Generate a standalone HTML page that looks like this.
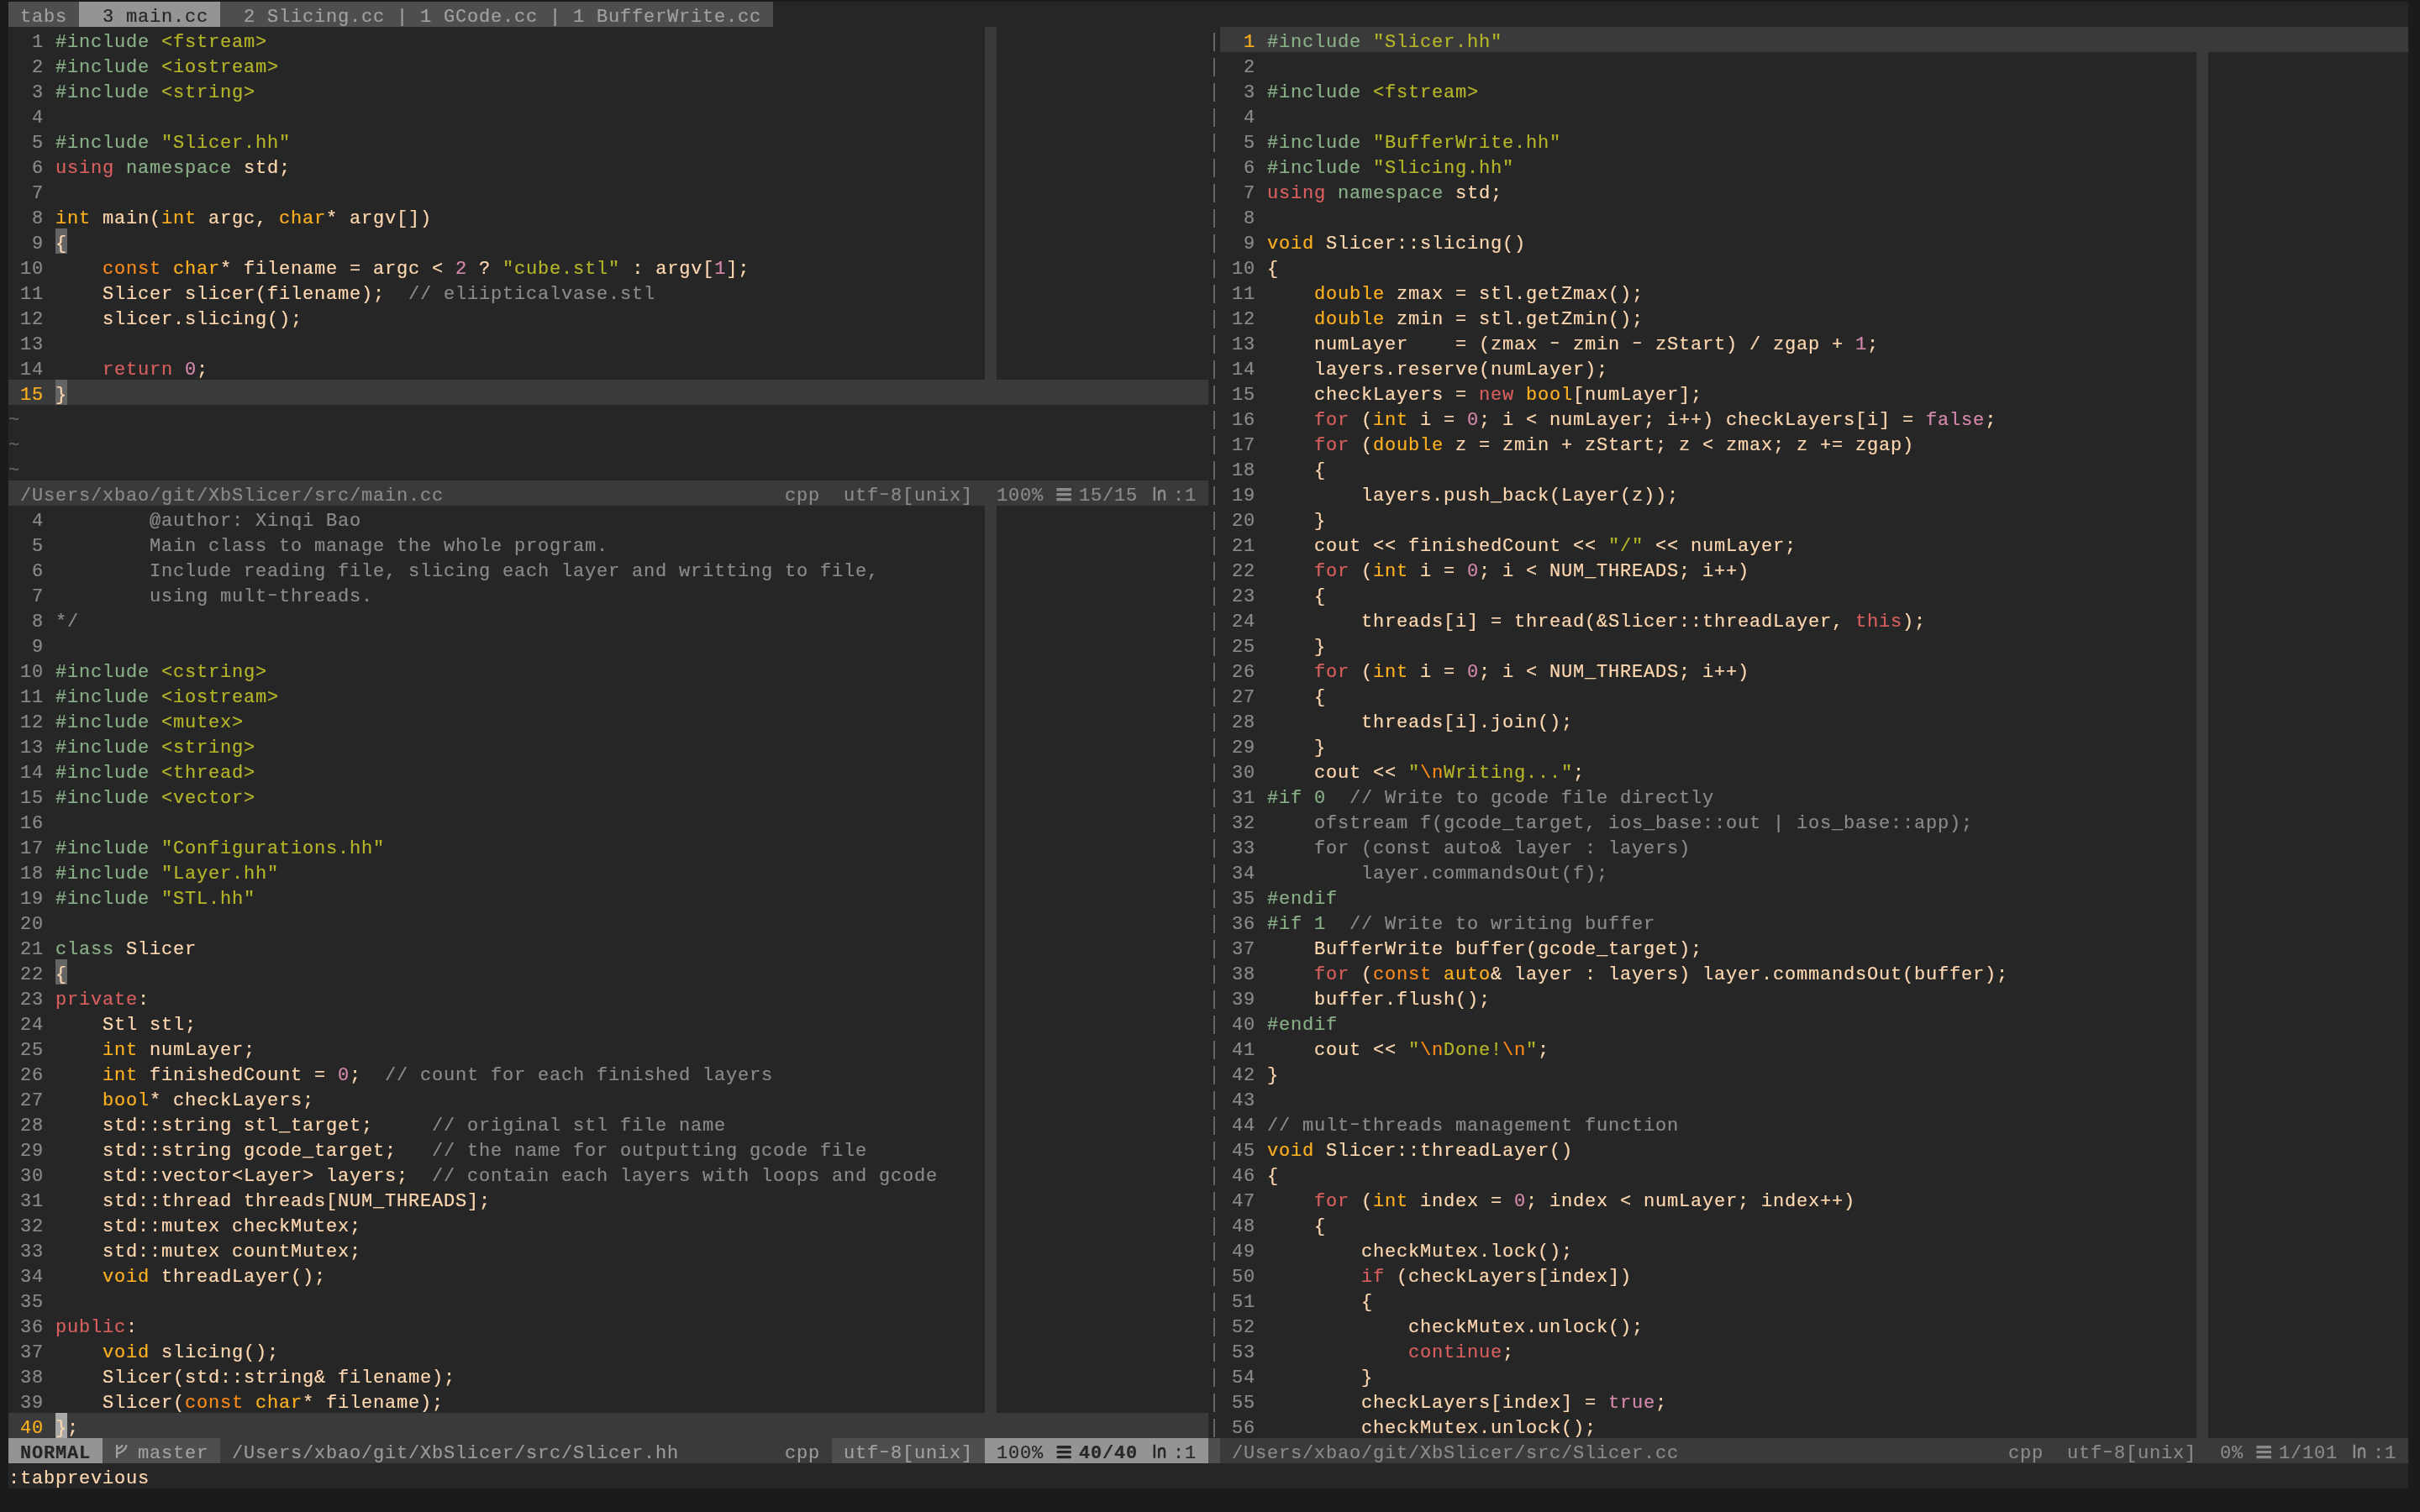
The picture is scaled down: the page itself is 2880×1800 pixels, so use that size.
<!DOCTYPE html><html><head><meta charset="utf-8"><style>
*{margin:0;padding:0;box-sizing:border-box}
html,body{width:2880px;height:1800px;overflow:hidden;background:#1b1b1b}
#scr{position:absolute;left:10px;top:2px;width:2856px;height:1770px;background:#262626}
.r{position:absolute}
.t{position:absolute;white-space:pre;font-family:"Liberation Mono",monospace;font-size:22px;letter-spacing:0.79814px;line-height:30px;height:30px;color:#fdd7b0}
.aqua{color:#8aaf88} .green{color:#b4b42a} .red{color:#d75f5f} .yellow{color:#fcb020}
.orange{color:#f98a1c} .purple{color:#d488ac} .gray{color:#8a8a8a}
.lnr{color:#8a8a8a} .cln{color:#fcb020} .nontext{color:#666666}
.tabf{color:#a0a0a0} .taba{color:#262626}
.sta{color:#262626} .stb{color:#a0a0a0} .stc{color:#9a9a9a} .stnc{color:#8a8a8a}
.hy{display:inline-block;transform:translateY(-1.7px) scaleX(1.45)} .b{font-weight:bold} .fgc{color:#fdd7b0}
#txt{position:absolute;left:0;top:0;width:2880px;height:1800px;will-change:transform;-webkit-text-stroke:0.2px currentColor;}
</style></head><body><div id="scr"></div><div class="r" style="left:10px;top:2px;width:84px;height:30px;background:#4e4e4e"></div><div class="r" style="left:94px;top:2px;width:168px;height:30px;background:#949494"></div><div class="r" style="left:262px;top:2px;width:658px;height:30px;background:#4e4e4e"></div><div class="r" style="left:1172px;top:32px;width:14px;height:450px;background:#3a3a3a"></div><div class="r" style="left:10px;top:452px;width:1428px;height:30px;background:#3a3a3a"></div><div class="r" style="left:66px;top:272px;width:14px;height:30px;background:#646464"></div><div class="r" style="left:66px;top:452px;width:14px;height:30px;background:#646464"></div><div class="r" style="left:1172px;top:602px;width:14px;height:1110px;background:#3a3a3a"></div><div class="r" style="left:10px;top:1682px;width:1428px;height:30px;background:#3a3a3a"></div><div class="r" style="left:66px;top:1142px;width:14px;height:30px;background:#646464"></div><div class="r" style="left:66px;top:1682px;width:14px;height:30px;background:#a8a8a8"></div><div class="r" style="left:2614px;top:32px;width:14px;height:1680px;background:#3a3a3a"></div><div class="r" style="left:1452px;top:32px;width:1414px;height:30px;background:#3a3a3a"></div><div class="r" style="left:1444px;top:39px;width:2px;height:22px;background:#666666"></div><div class="r" style="left:1444px;top:69px;width:2px;height:22px;background:#666666"></div><div class="r" style="left:1444px;top:99px;width:2px;height:22px;background:#666666"></div><div class="r" style="left:1444px;top:129px;width:2px;height:22px;background:#666666"></div><div class="r" style="left:1444px;top:159px;width:2px;height:22px;background:#666666"></div><div class="r" style="left:1444px;top:189px;width:2px;height:22px;background:#666666"></div><div class="r" style="left:1444px;top:219px;width:2px;height:22px;background:#666666"></div><div class="r" style="left:1444px;top:249px;width:2px;height:22px;background:#666666"></div><div class="r" style="left:1444px;top:279px;width:2px;height:22px;background:#666666"></div><div class="r" style="left:1444px;top:309px;width:2px;height:22px;background:#666666"></div><div class="r" style="left:1444px;top:339px;width:2px;height:22px;background:#666666"></div><div class="r" style="left:1444px;top:369px;width:2px;height:22px;background:#666666"></div><div class="r" style="left:1444px;top:399px;width:2px;height:22px;background:#666666"></div><div class="r" style="left:1444px;top:429px;width:2px;height:22px;background:#666666"></div><div class="r" style="left:1444px;top:459px;width:2px;height:22px;background:#666666"></div><div class="r" style="left:1444px;top:489px;width:2px;height:22px;background:#666666"></div><div class="r" style="left:1444px;top:519px;width:2px;height:22px;background:#666666"></div><div class="r" style="left:1444px;top:549px;width:2px;height:22px;background:#666666"></div><div class="r" style="left:1444px;top:579px;width:2px;height:22px;background:#666666"></div><div class="r" style="left:1444px;top:609px;width:2px;height:22px;background:#666666"></div><div class="r" style="left:1444px;top:639px;width:2px;height:22px;background:#666666"></div><div class="r" style="left:1444px;top:669px;width:2px;height:22px;background:#666666"></div><div class="r" style="left:1444px;top:699px;width:2px;height:22px;background:#666666"></div><div class="r" style="left:1444px;top:729px;width:2px;height:22px;background:#666666"></div><div class="r" style="left:1444px;top:759px;width:2px;height:22px;background:#666666"></div><div class="r" style="left:1444px;top:789px;width:2px;height:22px;background:#666666"></div><div class="r" style="left:1444px;top:819px;width:2px;height:22px;background:#666666"></div><div class="r" style="left:1444px;top:849px;width:2px;height:22px;background:#666666"></div><div class="r" style="left:1444px;top:879px;width:2px;height:22px;background:#666666"></div><div class="r" style="left:1444px;top:909px;width:2px;height:22px;background:#666666"></div><div class="r" style="left:1444px;top:939px;width:2px;height:22px;background:#666666"></div><div class="r" style="left:1444px;top:969px;width:2px;height:22px;background:#666666"></div><div class="r" style="left:1444px;top:999px;width:2px;height:22px;background:#666666"></div><div class="r" style="left:1444px;top:1029px;width:2px;height:22px;background:#666666"></div><div class="r" style="left:1444px;top:1059px;width:2px;height:22px;background:#666666"></div><div class="r" style="left:1444px;top:1089px;width:2px;height:22px;background:#666666"></div><div class="r" style="left:1444px;top:1119px;width:2px;height:22px;background:#666666"></div><div class="r" style="left:1444px;top:1149px;width:2px;height:22px;background:#666666"></div><div class="r" style="left:1444px;top:1179px;width:2px;height:22px;background:#666666"></div><div class="r" style="left:1444px;top:1209px;width:2px;height:22px;background:#666666"></div><div class="r" style="left:1444px;top:1239px;width:2px;height:22px;background:#666666"></div><div class="r" style="left:1444px;top:1269px;width:2px;height:22px;background:#666666"></div><div class="r" style="left:1444px;top:1299px;width:2px;height:22px;background:#666666"></div><div class="r" style="left:1444px;top:1329px;width:2px;height:22px;background:#666666"></div><div class="r" style="left:1444px;top:1359px;width:2px;height:22px;background:#666666"></div><div class="r" style="left:1444px;top:1389px;width:2px;height:22px;background:#666666"></div><div class="r" style="left:1444px;top:1419px;width:2px;height:22px;background:#666666"></div><div class="r" style="left:1444px;top:1449px;width:2px;height:22px;background:#666666"></div><div class="r" style="left:1444px;top:1479px;width:2px;height:22px;background:#666666"></div><div class="r" style="left:1444px;top:1509px;width:2px;height:22px;background:#666666"></div><div class="r" style="left:1444px;top:1539px;width:2px;height:22px;background:#666666"></div><div class="r" style="left:1444px;top:1569px;width:2px;height:22px;background:#666666"></div><div class="r" style="left:1444px;top:1599px;width:2px;height:22px;background:#666666"></div><div class="r" style="left:1444px;top:1629px;width:2px;height:22px;background:#666666"></div><div class="r" style="left:1444px;top:1659px;width:2px;height:22px;background:#666666"></div><div class="r" style="left:1444px;top:1689px;width:2px;height:22px;background:#666666"></div><div class="r" style="left:10px;top:572px;width:1428px;height:30px;background:#3a3a3a"></div><div class="r" style="left:10px;top:1712px;width:112px;height:30px;background:#949494"></div><div class="r" style="left:122px;top:1712px;width:140px;height:30px;background:#4e4e4e"></div><div class="r" style="left:262px;top:1712px;width:728px;height:30px;background:#3a3a3a"></div><div class="r" style="left:990px;top:1712px;width:182px;height:30px;background:#4e4e4e"></div><div class="r" style="left:1172px;top:1712px;width:266px;height:30px;background:#949494"></div><div class="r" style="left:1438px;top:1712px;width:14px;height:30px;background:#4e4e4e"></div><div class="r" style="left:1452px;top:1712px;width:1414px;height:30px;background:#3a3a3a"></div><div id="txt"><div class="t" style="left:10px;top:6px;"><span class="tabf"> tabs </span></div><div class="t" style="left:94px;top:6px;"><span class="taba">  3 main.cc </span></div><div class="t" style="left:262px;top:6px;"><span class="tabf">  2 Slicing.cc | 1 GCode.cc | 1 BufferWrite.cc </span></div><div class="t" style="left:10px;top:36px;"><span class="lnr">  1 </span></div><div class="t" style="left:66px;top:36px;"><span class="aqua">#include</span> <span class="green">&lt;fstream&gt;</span></div><div class="t" style="left:10px;top:66px;"><span class="lnr">  2 </span></div><div class="t" style="left:66px;top:66px;"><span class="aqua">#include</span> <span class="green">&lt;iostream&gt;</span></div><div class="t" style="left:10px;top:96px;"><span class="lnr">  3 </span></div><div class="t" style="left:66px;top:96px;"><span class="aqua">#include</span> <span class="green">&lt;string&gt;</span></div><div class="t" style="left:10px;top:126px;"><span class="lnr">  4 </span></div><div class="t" style="left:10px;top:156px;"><span class="lnr">  5 </span></div><div class="t" style="left:66px;top:156px;"><span class="aqua">#include</span> <span class="green">"Slicer.hh"</span></div><div class="t" style="left:10px;top:186px;"><span class="lnr">  6 </span></div><div class="t" style="left:66px;top:186px;"><span class="red">using</span> <span class="aqua">namespace</span> std;</div><div class="t" style="left:10px;top:216px;"><span class="lnr">  7 </span></div><div class="t" style="left:10px;top:246px;"><span class="lnr">  8 </span></div><div class="t" style="left:66px;top:246px;"><span class="yellow">int</span> main(<span class="yellow">int</span> argc, <span class="yellow">char</span>* argv[])</div><div class="t" style="left:10px;top:276px;"><span class="lnr">  9 </span></div><div class="t" style="left:66px;top:276px;">{</div><div class="t" style="left:10px;top:306px;"><span class="lnr"> 10 </span></div><div class="t" style="left:66px;top:306px;">    <span class="orange">const</span> <span class="yellow">char</span>* filename = argc &lt; <span class="purple">2</span> ? <span class="green">"cube.stl"</span> : argv[<span class="purple">1</span>];</div><div class="t" style="left:10px;top:336px;"><span class="lnr"> 11 </span></div><div class="t" style="left:66px;top:336px;">    Slicer slicer(filename);  <span class="gray">// eliipticalvase.stl</span></div><div class="t" style="left:10px;top:366px;"><span class="lnr"> 12 </span></div><div class="t" style="left:66px;top:366px;">    slicer.slicing();</div><div class="t" style="left:10px;top:396px;"><span class="lnr"> 13 </span></div><div class="t" style="left:10px;top:426px;"><span class="lnr"> 14 </span></div><div class="t" style="left:66px;top:426px;">    <span class="red">return</span> <span class="purple">0</span>;</div><div class="t" style="left:10px;top:456px;"><span class="cln"> 15 </span></div><div class="t" style="left:66px;top:456px;">}</div><div class="t" style="left:10px;top:486px;"><span class="nontext">~</span></div><div class="t" style="left:10px;top:516px;"><span class="nontext">~</span></div><div class="t" style="left:10px;top:546px;"><span class="nontext">~</span></div><div class="t" style="left:10px;top:606px;"><span class="lnr">  4 </span></div><div class="t" style="left:66px;top:606px;"><span class="gray">        @author: Xinqi Bao</span></div><div class="t" style="left:10px;top:636px;"><span class="lnr">  5 </span></div><div class="t" style="left:66px;top:636px;"><span class="gray">        Main class to manage the whole program.</span></div><div class="t" style="left:10px;top:666px;"><span class="lnr">  6 </span></div><div class="t" style="left:66px;top:666px;"><span class="gray">        Include reading file, slicing each layer and writting to file,</span></div><div class="t" style="left:10px;top:696px;"><span class="lnr">  7 </span></div><div class="t" style="left:66px;top:696px;"><span class="gray">        using mult<span class="hy">-</span>threads.</span></div><div class="t" style="left:10px;top:726px;"><span class="lnr">  8 </span></div><div class="t" style="left:66px;top:726px;"><span class="gray">*/</span></div><div class="t" style="left:10px;top:756px;"><span class="lnr">  9 </span></div><div class="t" style="left:10px;top:786px;"><span class="lnr"> 10 </span></div><div class="t" style="left:66px;top:786px;"><span class="aqua">#include</span> <span class="green">&lt;cstring&gt;</span></div><div class="t" style="left:10px;top:816px;"><span class="lnr"> 11 </span></div><div class="t" style="left:66px;top:816px;"><span class="aqua">#include</span> <span class="green">&lt;iostream&gt;</span></div><div class="t" style="left:10px;top:846px;"><span class="lnr"> 12 </span></div><div class="t" style="left:66px;top:846px;"><span class="aqua">#include</span> <span class="green">&lt;mutex&gt;</span></div><div class="t" style="left:10px;top:876px;"><span class="lnr"> 13 </span></div><div class="t" style="left:66px;top:876px;"><span class="aqua">#include</span> <span class="green">&lt;string&gt;</span></div><div class="t" style="left:10px;top:906px;"><span class="lnr"> 14 </span></div><div class="t" style="left:66px;top:906px;"><span class="aqua">#include</span> <span class="green">&lt;thread&gt;</span></div><div class="t" style="left:10px;top:936px;"><span class="lnr"> 15 </span></div><div class="t" style="left:66px;top:936px;"><span class="aqua">#include</span> <span class="green">&lt;vector&gt;</span></div><div class="t" style="left:10px;top:966px;"><span class="lnr"> 16 </span></div><div class="t" style="left:10px;top:996px;"><span class="lnr"> 17 </span></div><div class="t" style="left:66px;top:996px;"><span class="aqua">#include</span> <span class="green">"Configurations.hh"</span></div><div class="t" style="left:10px;top:1026px;"><span class="lnr"> 18 </span></div><div class="t" style="left:66px;top:1026px;"><span class="aqua">#include</span> <span class="green">"Layer.hh"</span></div><div class="t" style="left:10px;top:1056px;"><span class="lnr"> 19 </span></div><div class="t" style="left:66px;top:1056px;"><span class="aqua">#include</span> <span class="green">"STL.hh"</span></div><div class="t" style="left:10px;top:1086px;"><span class="lnr"> 20 </span></div><div class="t" style="left:10px;top:1116px;"><span class="lnr"> 21 </span></div><div class="t" style="left:66px;top:1116px;"><span class="aqua">class</span> Slicer</div><div class="t" style="left:10px;top:1146px;"><span class="lnr"> 22 </span></div><div class="t" style="left:66px;top:1146px;">{</div><div class="t" style="left:10px;top:1176px;"><span class="lnr"> 23 </span></div><div class="t" style="left:66px;top:1176px;"><span class="red">private</span>:</div><div class="t" style="left:10px;top:1206px;"><span class="lnr"> 24 </span></div><div class="t" style="left:66px;top:1206px;">    Stl stl;</div><div class="t" style="left:10px;top:1236px;"><span class="lnr"> 25 </span></div><div class="t" style="left:66px;top:1236px;">    <span class="yellow">int</span> numLayer;</div><div class="t" style="left:10px;top:1266px;"><span class="lnr"> 26 </span></div><div class="t" style="left:66px;top:1266px;">    <span class="yellow">int</span> finishedCount = <span class="purple">0</span>;  <span class="gray">// count for each finished layers</span></div><div class="t" style="left:10px;top:1296px;"><span class="lnr"> 27 </span></div><div class="t" style="left:66px;top:1296px;">    <span class="yellow">bool</span>* checkLayers;</div><div class="t" style="left:10px;top:1326px;"><span class="lnr"> 28 </span></div><div class="t" style="left:66px;top:1326px;">    std::string stl_target;     <span class="gray">// original stl file name</span></div><div class="t" style="left:10px;top:1356px;"><span class="lnr"> 29 </span></div><div class="t" style="left:66px;top:1356px;">    std::string gcode_target;   <span class="gray">// the name for outputting gcode file</span></div><div class="t" style="left:10px;top:1386px;"><span class="lnr"> 30 </span></div><div class="t" style="left:66px;top:1386px;">    std::vector&lt;Layer&gt; layers;  <span class="gray">// contain each layers with loops and gcode</span></div><div class="t" style="left:10px;top:1416px;"><span class="lnr"> 31 </span></div><div class="t" style="left:66px;top:1416px;">    std::thread threads[NUM_THREADS];</div><div class="t" style="left:10px;top:1446px;"><span class="lnr"> 32 </span></div><div class="t" style="left:66px;top:1446px;">    std::mutex checkMutex;</div><div class="t" style="left:10px;top:1476px;"><span class="lnr"> 33 </span></div><div class="t" style="left:66px;top:1476px;">    std::mutex countMutex;</div><div class="t" style="left:10px;top:1506px;"><span class="lnr"> 34 </span></div><div class="t" style="left:66px;top:1506px;">    <span class="yellow">void</span> threadLayer();</div><div class="t" style="left:10px;top:1536px;"><span class="lnr"> 35 </span></div><div class="t" style="left:10px;top:1566px;"><span class="lnr"> 36 </span></div><div class="t" style="left:66px;top:1566px;"><span class="red">public</span>:</div><div class="t" style="left:10px;top:1596px;"><span class="lnr"> 37 </span></div><div class="t" style="left:66px;top:1596px;">    <span class="yellow">void</span> slicing();</div><div class="t" style="left:10px;top:1626px;"><span class="lnr"> 38 </span></div><div class="t" style="left:66px;top:1626px;">    Slicer(std::string&amp; filename);</div><div class="t" style="left:10px;top:1656px;"><span class="lnr"> 39 </span></div><div class="t" style="left:66px;top:1656px;">    Slicer(<span class="orange">const</span> <span class="yellow">char</span>* filename);</div><div class="t" style="left:10px;top:1686px;"><span class="cln"> 40 </span></div><div class="t" style="left:66px;top:1686px;">};</div><div class="t" style="left:1452px;top:36px;"><span class="cln">  1 </span></div><div class="t" style="left:1508px;top:36px;"><span class="aqua">#include</span> <span class="green">"Slicer.hh"</span></div><div class="t" style="left:1452px;top:66px;"><span class="lnr">  2 </span></div><div class="t" style="left:1452px;top:96px;"><span class="lnr">  3 </span></div><div class="t" style="left:1508px;top:96px;"><span class="aqua">#include</span> <span class="green">&lt;fstream&gt;</span></div><div class="t" style="left:1452px;top:126px;"><span class="lnr">  4 </span></div><div class="t" style="left:1452px;top:156px;"><span class="lnr">  5 </span></div><div class="t" style="left:1508px;top:156px;"><span class="aqua">#include</span> <span class="green">"BufferWrite.hh"</span></div><div class="t" style="left:1452px;top:186px;"><span class="lnr">  6 </span></div><div class="t" style="left:1508px;top:186px;"><span class="aqua">#include</span> <span class="green">"Slicing.hh"</span></div><div class="t" style="left:1452px;top:216px;"><span class="lnr">  7 </span></div><div class="t" style="left:1508px;top:216px;"><span class="red">using</span> <span class="aqua">namespace</span> std;</div><div class="t" style="left:1452px;top:246px;"><span class="lnr">  8 </span></div><div class="t" style="left:1452px;top:276px;"><span class="lnr">  9 </span></div><div class="t" style="left:1508px;top:276px;"><span class="yellow">void</span> Slicer::slicing()</div><div class="t" style="left:1452px;top:306px;"><span class="lnr"> 10 </span></div><div class="t" style="left:1508px;top:306px;">{</div><div class="t" style="left:1452px;top:336px;"><span class="lnr"> 11 </span></div><div class="t" style="left:1508px;top:336px;">    <span class="yellow">double</span> zmax = stl.getZmax();</div><div class="t" style="left:1452px;top:366px;"><span class="lnr"> 12 </span></div><div class="t" style="left:1508px;top:366px;">    <span class="yellow">double</span> zmin = stl.getZmin();</div><div class="t" style="left:1452px;top:396px;"><span class="lnr"> 13 </span></div><div class="t" style="left:1508px;top:396px;">    numLayer    = (zmax <span class="hy">-</span> zmin <span class="hy">-</span> zStart) / zgap + <span class="purple">1</span>;</div><div class="t" style="left:1452px;top:426px;"><span class="lnr"> 14 </span></div><div class="t" style="left:1508px;top:426px;">    layers.reserve(numLayer);</div><div class="t" style="left:1452px;top:456px;"><span class="lnr"> 15 </span></div><div class="t" style="left:1508px;top:456px;">    checkLayers = <span class="red">new</span> <span class="yellow">bool</span>[numLayer];</div><div class="t" style="left:1452px;top:486px;"><span class="lnr"> 16 </span></div><div class="t" style="left:1508px;top:486px;">    <span class="red">for</span> (<span class="yellow">int</span> i = <span class="purple">0</span>; i &lt; numLayer; i++) checkLayers[i] = <span class="purple">false</span>;</div><div class="t" style="left:1452px;top:516px;"><span class="lnr"> 17 </span></div><div class="t" style="left:1508px;top:516px;">    <span class="red">for</span> (<span class="yellow">double</span> z = zmin + zStart; z &lt; zmax; z += zgap)</div><div class="t" style="left:1452px;top:546px;"><span class="lnr"> 18 </span></div><div class="t" style="left:1508px;top:546px;">    {</div><div class="t" style="left:1452px;top:576px;"><span class="lnr"> 19 </span></div><div class="t" style="left:1508px;top:576px;">        layers.push_back(Layer(z));</div><div class="t" style="left:1452px;top:606px;"><span class="lnr"> 20 </span></div><div class="t" style="left:1508px;top:606px;">    }</div><div class="t" style="left:1452px;top:636px;"><span class="lnr"> 21 </span></div><div class="t" style="left:1508px;top:636px;">    cout &lt;&lt; finishedCount &lt;&lt; <span class="green">"/"</span> &lt;&lt; numLayer;</div><div class="t" style="left:1452px;top:666px;"><span class="lnr"> 22 </span></div><div class="t" style="left:1508px;top:666px;">    <span class="red">for</span> (<span class="yellow">int</span> i = <span class="purple">0</span>; i &lt; NUM_THREADS; i++)</div><div class="t" style="left:1452px;top:696px;"><span class="lnr"> 23 </span></div><div class="t" style="left:1508px;top:696px;">    {</div><div class="t" style="left:1452px;top:726px;"><span class="lnr"> 24 </span></div><div class="t" style="left:1508px;top:726px;">        threads[i] = thread(&amp;Slicer::threadLayer, <span class="red">this</span>);</div><div class="t" style="left:1452px;top:756px;"><span class="lnr"> 25 </span></div><div class="t" style="left:1508px;top:756px;">    }</div><div class="t" style="left:1452px;top:786px;"><span class="lnr"> 26 </span></div><div class="t" style="left:1508px;top:786px;">    <span class="red">for</span> (<span class="yellow">int</span> i = <span class="purple">0</span>; i &lt; NUM_THREADS; i++)</div><div class="t" style="left:1452px;top:816px;"><span class="lnr"> 27 </span></div><div class="t" style="left:1508px;top:816px;">    {</div><div class="t" style="left:1452px;top:846px;"><span class="lnr"> 28 </span></div><div class="t" style="left:1508px;top:846px;">        threads[i].join();</div><div class="t" style="left:1452px;top:876px;"><span class="lnr"> 29 </span></div><div class="t" style="left:1508px;top:876px;">    }</div><div class="t" style="left:1452px;top:906px;"><span class="lnr"> 30 </span></div><div class="t" style="left:1508px;top:906px;">    cout &lt;&lt; <span class="green">"</span><span class="orange">\n</span><span class="green">Writing..."</span>;</div><div class="t" style="left:1452px;top:936px;"><span class="lnr"> 31 </span></div><div class="t" style="left:1508px;top:936px;"><span class="aqua">#if 0</span>  <span class="gray">// Write to gcode file directly</span></div><div class="t" style="left:1452px;top:966px;"><span class="lnr"> 32 </span></div><div class="t" style="left:1508px;top:966px;"><span class="gray">    ofstream f(gcode_target, ios_base::out | ios_base::app);</span></div><div class="t" style="left:1452px;top:996px;"><span class="lnr"> 33 </span></div><div class="t" style="left:1508px;top:996px;"><span class="gray">    for (const auto&amp; layer : layers)</span></div><div class="t" style="left:1452px;top:1026px;"><span class="lnr"> 34 </span></div><div class="t" style="left:1508px;top:1026px;"><span class="gray">        layer.commandsOut(f);</span></div><div class="t" style="left:1452px;top:1056px;"><span class="lnr"> 35 </span></div><div class="t" style="left:1508px;top:1056px;"><span class="aqua">#endif</span></div><div class="t" style="left:1452px;top:1086px;"><span class="lnr"> 36 </span></div><div class="t" style="left:1508px;top:1086px;"><span class="aqua">#if 1</span>  <span class="gray">// Write to writing buffer</span></div><div class="t" style="left:1452px;top:1116px;"><span class="lnr"> 37 </span></div><div class="t" style="left:1508px;top:1116px;">    BufferWrite buffer(gcode_target);</div><div class="t" style="left:1452px;top:1146px;"><span class="lnr"> 38 </span></div><div class="t" style="left:1508px;top:1146px;">    <span class="red">for</span> (<span class="orange">const</span> <span class="yellow">auto</span>&amp; layer : layers) layer.commandsOut(buffer);</div><div class="t" style="left:1452px;top:1176px;"><span class="lnr"> 39 </span></div><div class="t" style="left:1508px;top:1176px;">    buffer.flush();</div><div class="t" style="left:1452px;top:1206px;"><span class="lnr"> 40 </span></div><div class="t" style="left:1508px;top:1206px;"><span class="aqua">#endif</span></div><div class="t" style="left:1452px;top:1236px;"><span class="lnr"> 41 </span></div><div class="t" style="left:1508px;top:1236px;">    cout &lt;&lt; <span class="green">"</span><span class="orange">\n</span><span class="green">Done!</span><span class="orange">\n</span><span class="green">"</span>;</div><div class="t" style="left:1452px;top:1266px;"><span class="lnr"> 42 </span></div><div class="t" style="left:1508px;top:1266px;">}</div><div class="t" style="left:1452px;top:1296px;"><span class="lnr"> 43 </span></div><div class="t" style="left:1452px;top:1326px;"><span class="lnr"> 44 </span></div><div class="t" style="left:1508px;top:1326px;"><span class="gray">// mult<span class="hy">-</span>threads management function</span></div><div class="t" style="left:1452px;top:1356px;"><span class="lnr"> 45 </span></div><div class="t" style="left:1508px;top:1356px;"><span class="yellow">void</span> Slicer::threadLayer()</div><div class="t" style="left:1452px;top:1386px;"><span class="lnr"> 46 </span></div><div class="t" style="left:1508px;top:1386px;">{</div><div class="t" style="left:1452px;top:1416px;"><span class="lnr"> 47 </span></div><div class="t" style="left:1508px;top:1416px;">    <span class="red">for</span> (<span class="yellow">int</span> index = <span class="purple">0</span>; index &lt; numLayer; index++)</div><div class="t" style="left:1452px;top:1446px;"><span class="lnr"> 48 </span></div><div class="t" style="left:1508px;top:1446px;">    {</div><div class="t" style="left:1452px;top:1476px;"><span class="lnr"> 49 </span></div><div class="t" style="left:1508px;top:1476px;">        checkMutex.lock();</div><div class="t" style="left:1452px;top:1506px;"><span class="lnr"> 50 </span></div><div class="t" style="left:1508px;top:1506px;">        <span class="red">if</span> (checkLayers[index])</div><div class="t" style="left:1452px;top:1536px;"><span class="lnr"> 51 </span></div><div class="t" style="left:1508px;top:1536px;">        {</div><div class="t" style="left:1452px;top:1566px;"><span class="lnr"> 52 </span></div><div class="t" style="left:1508px;top:1566px;">            checkMutex.unlock();</div><div class="t" style="left:1452px;top:1596px;"><span class="lnr"> 53 </span></div><div class="t" style="left:1508px;top:1596px;">            <span class="red">continue</span>;</div><div class="t" style="left:1452px;top:1626px;"><span class="lnr"> 54 </span></div><div class="t" style="left:1508px;top:1626px;">        }</div><div class="t" style="left:1452px;top:1656px;"><span class="lnr"> 55 </span></div><div class="t" style="left:1508px;top:1656px;">        checkLayers[index] = <span class="purple">true</span>;</div><div class="t" style="left:1452px;top:1686px;"><span class="lnr"> 56 </span></div><div class="t" style="left:1508px;top:1686px;">        checkMutex.unlock();</div><div class="t" style="left:10px;top:576px;"><span class="stnc"> /Users/xbao/git/XbSlicer/src/main.cc</span></div><div class="t" style="left:934px;top:576px;"><span class="stnc">cpp</span></div><div class="t" style="left:1004px;top:576px;"><span class="stnc">utf<span class="hy">-</span>8[unix]</span></div><div class="t" style="left:1186px;top:576px;"><span class="stnc">100%</span></div><div class="t" style="left:1284px;top:576px;"><span class="stnc">15/15</span></div><div class="t" style="left:1396px;top:576px;"><span class="stnc">:1</span></div><div class="t" style="left:10px;top:1716px;"><span class="sta b"> NORMAL </span></div><div class="t" style="left:164px;top:1716px;"><span class="stb">master</span></div><div class="t" style="left:262px;top:1716px;"><span class="stc"> /Users/xbao/git/XbSlicer/src/Slicer.hh</span></div><div class="t" style="left:934px;top:1716px;"><span class="stc">cpp</span></div><div class="t" style="left:1004px;top:1716px;"><span class="stb">utf<span class="hy">-</span>8[unix]</span></div><div class="t" style="left:1186px;top:1716px;"><span class="sta">100%</span></div><div class="t" style="left:1284px;top:1716px;"><span class="sta b">40/40</span></div><div class="t" style="left:1396px;top:1716px;"><span class="sta">:1</span></div><div class="t" style="left:1466px;top:1716px;"><span class="stnc">/Users/xbao/git/XbSlicer/src/Slicer.cc</span></div><div class="t" style="left:2390px;top:1716px;"><span class="stnc">cpp</span></div><div class="t" style="left:2460px;top:1716px;"><span class="stnc">utf<span class="hy">-</span>8[unix]</span></div><div class="t" style="left:2642px;top:1716px;"><span class="stnc">0%</span></div><div class="t" style="left:2712px;top:1716px;"><span class="stnc">1/101</span></div><div class="t" style="left:2824px;top:1716px;"><span class="stnc">:1</span></div><div class="t" style="left:10px;top:1746px;"><span class="fgc">:tabprevious</span></div></div><svg class="r" style="left:1256px;top:572px" width="22" height="30" viewBox="0 0 22 30"><rect x="1.4" y="9.1" width="17.6" height="3.3" rx="0.4" fill="#8a8a8a"/><rect x="1.4" y="15.0" width="17.6" height="3.3" rx="0.4" fill="#8a8a8a"/><rect x="1.4" y="21.0" width="17.6" height="3.3" rx="0.4" fill="#8a8a8a"/></svg><svg class="r" style="left:1368px;top:572px" width="24" height="30" viewBox="0 0 24 30"><rect x="4.6" y="7.7" width="2.5" height="16.1" fill="#8a8a8a"/><path d="M11.2 23.8 V12.2 M11.2 15.5 C12 13 13.3 12.1 14.8 12.1 C17 12.1 18 13.6 18 16.2 V23.8" stroke="#8a8a8a" stroke-width="2.5" fill="none"/></svg><svg class="r" style="left:1256px;top:1712px" width="22" height="30" viewBox="0 0 22 30"><rect x="1.4" y="9.1" width="17.6" height="3.3" rx="1.5" fill="#262626"/><rect x="1.4" y="15.0" width="17.6" height="3.3" rx="1.5" fill="#262626"/><rect x="1.4" y="21.0" width="17.6" height="3.3" rx="1.5" fill="#262626"/></svg><svg class="r" style="left:1368px;top:1712px" width="24" height="30" viewBox="0 0 24 30"><rect x="4.6" y="7.7" width="2.5" height="16.1" fill="#262626"/><path d="M11.2 23.8 V12.2 M11.2 15.5 C12 13 13.3 12.1 14.8 12.1 C17 12.1 18 13.6 18 16.2 V23.8" stroke="#262626" stroke-width="2.5" fill="none"/></svg><svg class="r" style="left:2684px;top:1712px" width="22" height="30" viewBox="0 0 22 30"><rect x="1.4" y="9.1" width="17.6" height="3.3" rx="0.4" fill="#8a8a8a"/><rect x="1.4" y="15.0" width="17.6" height="3.3" rx="0.4" fill="#8a8a8a"/><rect x="1.4" y="21.0" width="17.6" height="3.3" rx="0.4" fill="#8a8a8a"/></svg><svg class="r" style="left:2796px;top:1712px" width="24" height="30" viewBox="0 0 24 30"><rect x="4.6" y="7.7" width="2.5" height="16.1" fill="#8a8a8a"/><path d="M11.2 23.8 V12.2 M11.2 15.5 C12 13 13.3 12.1 14.8 12.1 C17 12.1 18 13.6 18 16.2 V23.8" stroke="#8a8a8a" stroke-width="2.5" fill="none"/></svg><svg class="r" style="left:136px;top:1712px" width="16" height="30" viewBox="0 0 16 30"><path d="M3.1 7.9 V23.8 M4.1 18.3 C8 17.5 13.5 14 14.7 8.2 M4.1 12.4 C6.5 11.8 9.2 10.5 9.7 8.2" stroke="#a0a0a0" stroke-width="2.3" fill="none"/></svg></body></html>
